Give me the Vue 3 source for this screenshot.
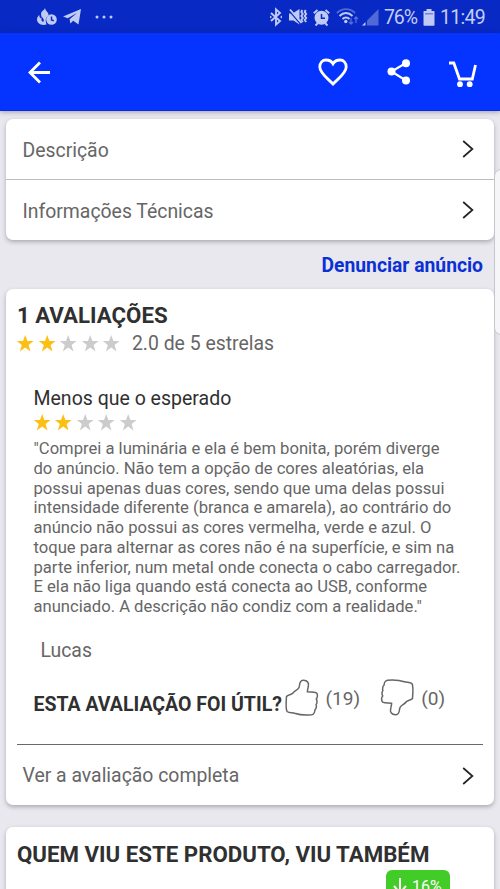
<script setup>
const rows = ['Descrição', 'Informações Técnicas']
const reviewLines = [
  '"Comprei a luminária e ela é bem bonita, porém diverge',
  'do anúncio. Não tem a opção de cores aleatórias, ela',
  'possui apenas duas cores, sendo que uma delas possui',
  'intensidade diferente (branca e amarela), ao contrário do',
  'anúncio não possui as cores vermelha, verde e azul. O',
  'toque para alternar as cores não é na superfície, e sim na',
  'parte inferior, num metal onde conecta o cabo carregador.',
  'E ela não liga quando está conecta ao USB, conforme',
  'anunciado. A descrição não condiz com a realidade."'
]
const star = 'M8.200 0l2.200 6h6.200l-5 4 1.900 6.600-5.300-4-5.300 4L4.800 10 -.2 6H6z'
</script>

<template>
  <div class="screen">
    <div class="status">
      <svg class="flame" width="21" height="18" viewBox="0 0 21 18">
        <path d="M8 0c.3 3 4 4.500 3.600 7.500C9 9 8 11.500 9.500 16.500 4 18 0 15 0 11.500 0 9.500 1 8 2.300 7c0 2 .7 3.300 1.700 3.300C6 10.300 3 7 4.500 4 5.500 2.500 7.500 2 8 0z" />
        <path class="notch" d="M5 9c-1 2-1 4 1 5 1.500-1 1-3-1-5z" />
        <circle cx="14.500" cy="11.500" r="5.300" />
        <path class="ink" d="M14.500 8.500v3.400l2.300.8" />
      </svg>
      <svg class="plane" width="18" height="17" viewBox="0 0 18 17">
        <path d="M0 7.600L18 0l-2.500 15.500-5.300-3.800-2.900 2.800-.7-4.300L14 4 4.700 9.300z" />
      </svg>
      <svg class="dots" width="18" height="4" viewBox="0 0 18 4">
        <circle cx="2" cy="2" r="1.500" /><circle cx="9" cy="2" r="1.500" /><circle cx="16" cy="2" r="1.500" />
      </svg>
      <div class="status-right">
        <svg class="bt" width="12" height="18" viewBox="0 0 12 18">
          <path class="line" d="M1 5l9 8-4 3.600V1.400L10 5l-9 8" />
          <path d="M0 7.500l2 1.500-2 1.500zM12 7.500L10 9l2 1.500z" />
        </svg>
        <svg class="mute" width="18" height="18" viewBox="0 0 18 18">
          <path d="M0 5.500h3.500L10.500 1v15.500L4.500 12.500H0z" />
          <path class="cut" d="M0 2.500L12 16.500" />
          <path class="line" d="M1 1.500L12.500 15" />
          <path class="line" d="M13.300 2l-1 2 1.500 2-1.500 2 1.500 2-1.500 2 1.500 2M16.700 2l-1 2 1.500 2-1.500 2 1.500 2-1.500 2 1.500 2" />
        </svg>
        <svg class="alarm" width="17" height="17" viewBox="0 0 17 17">
          <circle cx="8.500" cy="8.800" r="7" />
          <path class="line" d="M.8 4.300L4.500 1M16.200 4.300L12.500 1M2.500 16.500l2.500-2.500M14.500 16.500L12 14" />
          <path class="ink" d="M8.500 5v4.300h3.500" />
        </svg>
        <svg class="wifi" width="23" height="18" viewBox="0 0 23 18">
          <path class="line faint" d="M1 5C6-.2 14-.2 19 5" />
          <path class="line" d="M3.500 8c4-4 9-4 13 0M6.500 11c2-2 5-2 7 0" />
          <circle cx="9.800" cy="13.500" r="1.700" />
          <path class="tiny" d="M15 10v6M13 14l2 2 2-2M20 15v-6M18.300 11l1.700-2 2 2" />
        </svg>
        <svg class="signal" width="17" height="17" viewBox="0 0 17 17">
          <path class="faint" d="M16.500 0v16.500H5V11.500z" /><path d="M0 16.500l3.500-3.500v3.500z" />
        </svg>
        <span class="percent">76%</span>
        <svg class="battery" width="12" height="17" viewBox="0 0 12 17">
          <path d="M3.500 0h5v2H11q.5 0 .5.500V16q0 .8-.8.8H1.300q-.8 0-.8-.8V2.500Q.5 2 1 2h2.500z" />
          <path class="level" d="M2 4h8v1.500H2z" />
        </svg>
        <span class="clock">11:49</span>
      </div>
    </div>

    <header class="appbar">
      <svg class="back" width="23" height="23" viewBox="0 0 23 23"><path d="M12 1.500L2 11.500l10 10M2 11.500h20" /></svg>
      <svg class="heart" width="30" height="28" viewBox="0 0 30 28"><path d="M15 26C11 21.500 1.800 15.500 1.800 9 1.800 4.800 4.500 2 8 2c3.300 0 5.500 1.200 7 3.700C16.500 3.200 18.700 2 22 2c3.500 0 6.200 2.800 6.200 7C28.200 15.500 19 21.500 15 26z" /></svg>
      <svg class="share" width="24" height="26" viewBox="0 0 24 26">
        <path d="M19 4L4.500 12.500 19 21.500" />
        <circle cx="19" cy="4.200" r="4" /><circle cx="4.500" cy="12.500" r="4" /><circle cx="19" cy="21.400" r="4" />
      </svg>
      <svg class="cart" width="28" height="27" viewBox="0 0 28 27">
        <path d="M0 2h4.800L10.500 18h12.800L26.500 4" />
        <circle cx="11" cy="23.200" r="2.900" /><circle cx="20.700" cy="23.200" r="2.900" />
      </svg>
    </header>

    <main class="content">
      <section class="card links">
        <div v-for="row in rows" :key="row" class="row">
          <span>{{ row }}</span>
          <svg class="chevron" width="12" height="18" viewBox="0 0 12 18"><path d="M1.200 1l9.200 8-9.200 8" /></svg>
        </div>
      </section>

      <div class="report"><span>Denunciar anúncio</span></div>

      <section class="card reviews">
        <h2 class="title">1 AVALIAÇÕES</h2>
        <div class="rating">
          <svg v-for="n in 5" :key="n" class="star" :class="{ on: n <= 2 }" width="17" height="17" viewBox="0 0 17 17"><path :d="star" /></svg>
          <span class="score">2.0 de 5 estrelas</span>
        </div>
        <article class="review">
          <h3>Menos que o esperado</h3>
          <div class="rating small">
            <svg v-for="n in 5" :key="n" class="star" :class="{ on: n <= 2 }" width="17" height="17" viewBox="0 0 17 17"><path :d="star" /></svg>
          </div>
          <p class="text"><span v-for="line in reviewLines" :key="line">{{ line }}</span></p>
          <div class="author">Lucas</div>
          <div class="useful">
            <strong>ESTA AVALIAÇÃO FOI ÚTIL?</strong>
            <svg class="thumb up" width="34" height="37" viewBox="0 0 34 37">
              <path d="M1.500 17.500C3 15.500 6.500 16 8 14c1.500-2.500 5-3 6-5.500 1-2.500 0-7 4-7.200 5-.2 6.200 3.200 5.200 6.700-.5 2-.9 3.500-.8 4.800 3.200.4 6.500-.3 9 1 1.500 1.500 1.200 5-.1 6.200 1 1.500.9 4.500-.2 5.500.7 1.500.2 4.500-1.200 5.500 0 2-1.300 4.500-3.300 4.800-6 .7-12 .2-17-1.500-2.200-.9-5.500-.2-7.500-1.800-1.500-2-1-10-.6-15z" />
            </svg>
            <span class="count">(19)</span>
            <svg class="thumb down" width="34" height="37" viewBox="0 0 34 37">
              <path d="M32.500 19.500c-1.500 2-5 1.500-6.500 3.500-1.500 2.500-5 3-6 5.500-1 2.500 0 7-4 7.200-5 .2-6.200-3.200-5.200-6.700.5-2 .9-3.500.8-4.800-3.200-.4-6.500.3-9-1-1.500-1.500-1.200-5 .1-6.200-1-1.500-.9-4.500.2-5.500-.7-1.500-.2-4.500 1.200-5.500 0-2 1.300-4.500 3.300-4.800 6-.4 12-.2 17 1.500 2.200.9 5.500.2 7.500 1.800 1.500 2 1 10 .6 15z" />
            </svg>
            <span class="count">(0)</span>
          </div>
        </article>
        <div class="full">
          <span>Ver a avaliação completa</span>
          <svg class="chevron" width="12" height="18" viewBox="0 0 12 18"><path d="M1.200 1l9.200 8-9.200 8" /></svg>
        </div>
      </section>

      <section class="card also">
        <h2 class="title">QUEM VIU ESTE PRODUTO, VIU TAMBÉM</h2>
        <div class="discount">
          <svg width="14" height="18" viewBox="0 0 14 18"><path d="M7 0v15M1 8l6 7 6-7" /></svg>
          <span>16%</span>
        </div>
      </section>
      <div class="edge-handle"></div>
    </main>
  </div>
</template>

<style>
body { margin: 0; overflow: hidden; }
</style>

<style scoped>
.screen { width: 500px; height: 889px; overflow: hidden; display: flex; flex-direction: column; background: #e8e8ee; font-family: Roboto, sans-serif; color: #666; white-space: nowrap; }
svg { flex: none; display: block; overflow: visible; }
h2, h3, p { margin: 0; }

.status { flex: none; height: 33px; box-sizing: border-box; padding: 1px 14px 0 37px; background: #0829c4; display: flex; align-items: center; color: #c4cdf5; }
.status svg { fill: #bfcaf5; }
.plane { margin-left: 5px; }
.dots { margin-left: 14px; }
.status .line { fill: none; stroke: #bfcaf5; stroke-width: 1.9; }
.status .ink { fill: none; stroke: #0829c4; stroke-width: 1.5; }
.status .notch { fill: #0829c4; }
.status .cut { fill: none; stroke: #0829c4; stroke-width: 1.3; }
.status .tiny { fill: none; stroke: #566dda; stroke-width: 1.3; }
.status .faint { opacity: .4; }
.status .level { fill: #7385dc; }
.status-right { margin-left: auto; display: flex; align-items: center; }
.mute { margin-left: 7px; }
.alarm { margin-left: 6px; }
.wifi { margin-left: 6px; }
.signal { margin-left: 3px; }
.percent { width: 33px; margin-left: 5px; font-size: 19.500px; letter-spacing: -1.100px; }
.battery { margin-left: 6px; }
.clock { width: 46px; margin-left: 5px; font-size: 19.500px; letter-spacing: -.7px; }

.appbar { flex: none; z-index: 1; height: 78px; box-sizing: border-box; padding: 0 23px 0 28px; background: #0533ff; border-bottom: 1px solid #0b2fd0; box-shadow: 0 1px 5px rgba(20, 20, 60, .35); display: flex; align-items: center; }
.appbar svg { fill: none; stroke: #fff; stroke-width: 2.8; }
.appbar circle { fill: #fff; stroke: none; }
.back { margin-top: 1px; }
.heart { margin-left: auto; margin-top: 1px; }
.share { margin-left: 39px; }
.share path { stroke-width: 2.2; }
.cart { margin-left: 38px; margin-top: 6px; }

.content { position: relative; padding: 8px 6px 0; display: flex; flex-direction: column; }
.card { flex: none; background: #fff; border-radius: 7px; box-shadow: 0 2px 4px rgba(30, 30, 50, .3); box-sizing: border-box; }
.links { height: 121px; }
.row { height: 61px; box-sizing: border-box; padding: 0 20px 0 16.500px; display: flex; align-items: center; justify-content: space-between; font-size: 19.400px; }
.row span { padding-top: 2px; }
.row:first-child { border-bottom: 1px solid #bdbdbf; }
.row + .row { height: 60px; }
.chevron { fill: none; stroke: #222; stroke-width: 1.7; }
.report { height: 49px; box-sizing: border-box; padding: 2px 11px 0; display: flex; align-items: center; justify-content: flex-end; color: #0b31d4; font-size: 19.300px; font-weight: 700; }

.reviews { height: 516px; padding: 13px 11px 0; display: flex; flex-direction: column; }
.reviews > * { flex-shrink: 0; }
.title { color: #303030; font-size: 22.250px; line-height: 26px; font-weight: 700; }
.rating { height: 30px; display: flex; align-items: center; gap: 4.600px; }
.star { fill: #ccc; }
.star.on { fill: #fcc014; }
.score { margin-left: 7px; font-size: 19.400px; }
.review { height: 386px; padding: 28px 0 0 16.500px; box-sizing: border-box; }
.review h3 { color: #303030; font-size: 19.500px; line-height: 26px; font-weight: 400; }
.small { height: 20px; }
.text { margin-top: 7px; display: flex; flex-direction: column; font-size: 16.620px; line-height: 19.750px; }
.author { margin: 21px 0 0 7px; font-size: 19.400px; line-height: 26px; }
.useful { height: 37px; margin-top: 15px; display: flex; align-items: center; }
.useful strong { width: 251px; padding-top: 15px; color: #303030; font-size: 19.500px; line-height: 24px; }
.thumb { fill: none; stroke: #666; stroke-width: 1.5; }
.down { margin-left: 20px; }
.count { margin-left: 7px; padding-top: 3px; font-size: 19.100px; }
.full { height: 59.500px; padding: 1px 9px 0 5.500px; border-top: 1.500px solid #69696c; box-sizing: content-box; display: flex; align-items: center; justify-content: space-between; font-size: 19.400px; }

.also { height: 90px; margin-top: 22px; padding: 14px 44px 0 11px; display: flex; flex-direction: column; }
.discount { align-self: flex-end; width: 64px; height: 34px; margin-top: 3px; padding: 8px 7px 0; box-sizing: border-box; border-radius: 6px; background: #42cc28; color: #fff; display: flex; align-items: flex-start; gap: 5px; font-size: 16px; line-height: 17px; }
.discount svg { fill: none; stroke: #fff; stroke-width: 2; }
.edge-handle { position: absolute; top: 58px; left: 494px; width: 12px; height: 164px; border: 1px solid #c6c6cb; border-radius: 7px; background: #f6f6f8; }
</style>
